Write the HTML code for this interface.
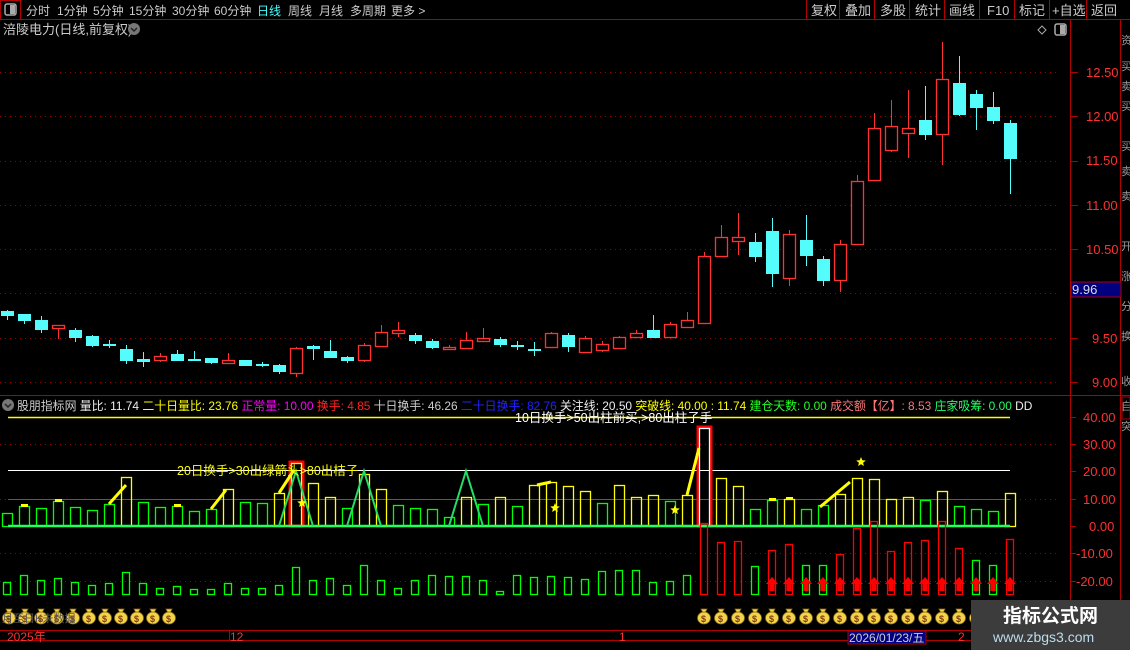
<!DOCTYPE html>
<html><head><meta charset="utf-8"><style>
body{margin:0;background:#000;width:1130px;height:650px;overflow:hidden;font-family:"Liberation Sans","Noto Sans CJK SC",sans-serif;}
svg{position:absolute;left:0;top:0}
text{font-family:"Liberation Sans","Noto Sans CJK SC",sans-serif}
</style></head><body>
<svg id="s" width="1130" height="650" xmlns="http://www.w3.org/2000/svg">
<rect width="1130" height="650" fill="#000"/>
<line x1="0" y1="19.5" x2="1130" y2="19.5" stroke="#b00000"/>
<rect x="0.5" y="0.5" width="20" height="19" fill="none" stroke="#b00000"/>
<rect x="5" y="4" width="11" height="11" rx="2" fill="none" stroke="#aaa" stroke-width="1.5"/><rect x="10" y="5" width="5" height="9" fill="#aaa"/>
<g font-size="12" fill="#ccc">
<text x="26" y="15">分时</text><text x="57" y="15">1分钟</text><text x="93" y="15">5分钟</text><text x="129" y="15">15分钟</text><text x="172" y="15">30分钟</text><text x="214" y="15">60分钟</text>
<text x="257" y="15" fill="#4ff">日线</text><text x="288" y="15">周线</text><text x="319" y="15">月线</text><text x="350" y="15">多周期</text><text x="391" y="15">更多 &gt;</text>
</g>
<g font-size="13" fill="#ccc">
<text x="811" y="15">复权</text><text x="845" y="15">叠加</text><text x="880" y="15">多股</text><text x="915" y="15">统计</text><text x="949" y="15">画线</text><text x="987" y="15">F10</text><text x="1019" y="15">标记</text><text x="1052" y="15">+自选</text><text x="1091" y="15">返回</text>
</g>
<g stroke="#b00000"><line x1="806.5" y1="0" x2="806.5" y2="19"/><line x1="839.5" y1="0" x2="839.5" y2="19"/><line x1="874.5" y1="0" x2="874.5" y2="19"/><line x1="909.5" y1="0" x2="909.5" y2="19"/><line x1="944.5" y1="0" x2="944.5" y2="19"/><line x1="979.5" y1="0" x2="979.5" y2="19"/><line x1="1014.5" y1="0" x2="1014.5" y2="19"/><line x1="1049.5" y1="0" x2="1049.5" y2="19"/><line x1="1086.5" y1="0" x2="1086.5" y2="19"/></g>
<text x="3" y="34" font-size="13" fill="#ccc">涪陵电力(日线,前复权)</text>
<circle cx="134" cy="29" r="6" fill="#777"/><path d="M131 28l3 3 3-3" stroke="#222" stroke-width="1.5" fill="none"/>
<path d="M1042 26l4 4-4 4-4-4z" fill="none" stroke="#aaa"/>
<rect x="1055" y="24" width="11" height="11" rx="2" fill="none" stroke="#aaa" stroke-width="1.5"/><rect x="1060" y="25" width="5" height="9" fill="#aaa"/>
<line x1="1070.5" y1="20" x2="1070.5" y2="650" stroke="#b00000"/>
<line x1="1120.5" y1="20" x2="1120.5" y2="630" stroke="#b00000"/>
<line x1="0" y1="395.5" x2="1130" y2="395.5" stroke="#b00000"/>
<line x1="0" y1="630.5" x2="1130" y2="630.5" stroke="#b00000"/>
<line x1="0" y1="640.5" x2="1130" y2="640.5" stroke="#b00000"/>
<g id="dyn"></g>
<g font-size="13" fill="#ff3030">
<text x="1086" y="77">12.50</text><text x="1086" y="121">12.00</text><text x="1086" y="165">11.50</text><text x="1086" y="210">11.00</text><text x="1086" y="254">10.50</text><text x="1092" y="343">9.50</text><text x="1092" y="387">9.00</text>
<text x="1083" y="422">40.00</text><text x="1083" y="449">30.00</text><text x="1083" y="476">20.00</text><text x="1083" y="504">10.00</text><text x="1089" y="531">0.00</text><text x="1076" y="558">-10.00</text><text x="1076" y="586">-20.00</text>
</g>
<rect x="1071" y="282" width="50" height="15" fill="#000080" stroke="#b00000"/>
<text x="1072" y="294" font-size="13" fill="#ddd">9.96</text>
<g fill="#999" font-size="11"><text x="1121" y="44">资</text><text x="1121" y="70">买</text><text x="1121" y="90">卖</text><text x="1121" y="110">买</text><text x="1121" y="150">买</text><text x="1121" y="175">卖</text><text x="1121" y="200">卖</text><text x="1121" y="250">开</text><text x="1121" y="280">涨</text><text x="1121" y="310">分</text><text x="1121" y="340">换</text><text x="1121" y="385">收</text><text x="1121" y="410">自</text><text x="1121" y="430">突</text></g>
<circle cx="8" cy="405" r="6" fill="#777"/><path d="M5 404l3 3 3-3" stroke="#222" stroke-width="1.5" fill="none"/>
<text y="410" font-size="11.9"><tspan x="17" fill="#ccc">股朋指标网</tspan><tspan fill="#eee"> 量比: 11.74 </tspan><tspan fill="#ff0">二十日量比: 23.76 </tspan><tspan fill="#f0f">正常量: 10.00 </tspan><tspan fill="#f22">换手: 4.85 </tspan><tspan fill="#ccc">十日换手: 46.26 </tspan><tspan fill="#22f">二十日换手: 82.76 </tspan><tspan fill="#eee">关注线: 20.50 </tspan><tspan fill="#ff0">突破线: 40.00 : 11.74 </tspan><tspan fill="#2f2">建仓天数: 0.00 </tspan><tspan fill="#f77">成交额【亿】: 8.53 </tspan><tspan fill="#2f6">庄家吸筹: 0.00 </tspan><tspan fill="#eee">DD</tspan></text>
<rect x="1122" y="397" width="8" height="22" fill="none" stroke="#b00000"/>
<g font-size="12" fill="#ff3030"><text x="7" y="641">2025年</text><text x="230" y="641">12</text><text x="619" y="641">1</text><text x="958" y="641">2</text></g>
<line x1="229.5" y1="630" x2="229.5" y2="640" stroke="#b00000"/>
<rect x="848" y="631" width="78" height="13" fill="#000080" stroke="#b00000"/>
<text x="849" y="642" font-size="12" fill="#ccc">2026/01/23/五</text>
<text x="2" y="622" font-size="11" fill="#555">月至日K未数据</text>
<rect x="971" y="600" width="159" height="50" fill="#3c3c3c"/>
<text x="1003" y="622" font-size="19" font-weight="bold" fill="#fff">指标公式网</text>
<text x="993" y="642" font-size="14" fill="#bde">www.zbgs3.com</text>
</svg>
<script>
var g=document.getElementById('dyn'),h='';
function py(p){return 72+(12.5-p)*88.57}
[12.5,12,11.5,11,10.5,10,9.5,9].forEach(function(p){var y=Math.round(py(p))+0.5;h+='<line x1="0" y1="'+y+'" x2="1060" y2="'+y+'" stroke="#900" stroke-dasharray="1,4"/><line x1="1070" y1="'+y+'" x2="1078" y2="'+y+'" stroke="#b00000"/>';});
[444,499,553,581].forEach(function(y){h+='<line x1="0" y1="'+(y+.5)+'" x2="1060" y2="'+(y+.5)+'" stroke="#900" stroke-dasharray="1,4"/>';});
[417,444,471,499,526,553,581].forEach(function(y){h+='<line x1="1070" y1="'+(y+.5)+'" x2="1076" y2="'+(y+.5)+'" stroke="#b00000"/>';});
var C=[[311,315,310,320,0],[314,320,314,324,0],[320,329,316,333,0],[325,328,325,339,1],[330,337,328,342,0],[336,345,335,347,0],[344,345,340,348,0],[349,360,345,364,0],[359,361,352,367,0],[356,360,353,362,1],[354,360,350,360,0],[359,360,351,360,0],[358,362,358,364,0],[360,363,353,363,1],[360,365,360,366,0],[364,365,362,367,0],[365,371,364,374,0],[348,373,347,377,1],[346,348,345,360,0],[351,357,340,357,0],[357,360,356,363,0],[345,360,343,362,1],[332,346,325,346,1],[330,333,322,337,1],[335,340,333,344,0],[341,347,339,349,0],[347,349,345,350,1],[340,348,332,348,1],[338,341,328,341,1],[339,344,337,347,0],[345,346,341,350,0],[349,350,342,356,0],[333,347,332,348,1],[335,346,333,352,0],[338,352,336,353,1],[344,350,341,352,1],[337,348,336,349,1],[333,337,330,338,1],[330,337,315,338,0],[324,337,322,338,1],[320,327,312,328,1],[256,323,252,324,1],[237,256,225,257,1],[237,241,213,255,1],[242,256,233,262,0],[231,273,218,287,0],[234,278,230,286,1],[240,255,215,266,0],[259,280,256,286,0],[244,280,240,292,1],[181,244,175,245,1],[128,180,113,181,1],[126,150,100,152,1],[128,133,90,158,1],[120,134,86,140,0],[79,134,42,165,1],[83,114,56,116,0],[94,107,90,130,0],[107,120,92,124,0],[123,158,120,194,0]];
C.forEach(function(c,i){var x=7+i*17,col=c[4]?'#ff3232':'#54fcfc';
h+='<line x1="'+(x+.5)+'" y1="'+c[2]+'" x2="'+(x+.5)+'" y2="'+c[3]+'" stroke="'+col+'"/>';
var bh=Math.max(c[1]-c[0],1);
if(c[4])h+='<rect x="'+(x-5.5)+'" y="'+(c[0]+.5)+'" width="12" height="'+bh+'" fill="#000" stroke="'+col+'" stroke-width="1.3"/>';
else h+='<rect x="'+(x-6)+'" y="'+c[0]+'" width="13" height="'+(bh+1)+'" fill="'+col+'"/>';});
h+='<line x1="8" y1="417.5" x2="1010" y2="417.5" stroke="#ff0" stroke-width="1.5"/>';
h+='<line x1="8" y1="470.5" x2="1010" y2="470.5" stroke="#fff"/>';
h+='<line x1="8" y1="499.5" x2="1010" y2="499.5" stroke="#d0d"/>';
var U=[513,506,508,501,507,510,504,477,502,507,506,511,509,489,502,503,493,463,483,497,508,474,489,505,508,509,517,497,504,497,506,485,482,486,491,503,485,497,495,501,495,428,478,486,509,500,499,509,505,494,478,479,499,497,500,491,506,509,511,493];
U.forEach(function(t,i){var x=7+i*17,yel=t<=499&&i!=45;var col=yel?'#ff0':'#0f0';
if(i==17||i==41)h+='<rect x="'+(x-6)+'" y="'+(t-1)+'" width="13" height="'+(527-t)+'" fill="none" stroke="#f00" stroke-width="3"/>';
h+='<rect x="'+(x-4.5)+'" y="'+(t+.5)+'" width="10" height="'+(526-t)+'" fill="none" stroke="'+(i==41?'#fff':col)+'" stroke-width="1.3"/>';});
h+='<line x1="8" y1="526" x2="1010" y2="526" stroke="#2f6" stroke-width="2.5"/>';
[[279,296,313],[347,364,381],[449,466,483]].forEach(function(t){h+='<polyline points="'+t[0]+',526 '+t[1]+',471 '+t[2]+',526" fill="none" stroke="#2d6" stroke-width="2"/>';});
[[109,504,126,485],[211,509,226,490],[279,493,294,470],[551,482,537,485],[687,495,699,448],[820,507,850,482]].forEach(function(l){h+='<line x1="'+l[0]+'" y1="'+l[1]+'" x2="'+l[2]+'" y2="'+l[3]+'" stroke="#ff0" stroke-width="3"/>';});
[[24,506],[58,501],[177,506],[772,500],[789,499]].forEach(function(d){h+='<rect x="'+(d[0]-3)+'" y="'+(d[1]-2)+'" width="7" height="3" fill="#ff0"/>';});
function star(x,y){var p=[];for(var k=0;k<10;k++){var r=k%2?2.2:5,a=-Math.PI/2+k*Math.PI/5;p.push((x+r*Math.cos(a)).toFixed(1)+','+(y+r*Math.sin(a)).toFixed(1));}h+='<polygon points="'+p.join(' ')+'" fill="#ff0"/>';}
star(302,503);star(555,508);star(675,510);star(861,462);
h+='<text x="177" y="475" font-size="12.5" fill="#ff0">20日换手&gt;30出绿箭头&gt;80出桔子</text>';
h+='<text x="515" y="422" font-size="12.5" fill="#fff">10日换手&gt;50出柱前买,&gt;80出柱子手</text>';
var L=[582,575,580,578,582,585,583,572,583,588,586,589,589,583,588,588,585,567,580,578,585,565,580,588,580,575,576,576,580,591,575,577,576,577,579,571,570,570,582,581,575,523,542,541,566,550,544,565,565,554,528,521,551,542,540,521,548,560,565,539];
L.forEach(function(t,i){var x=7+i*17,red=i>=41&&!(i==44||i==47||i==48||i==57||i==58);var col=red?'#f00':'#0f0';
h+='<rect x="'+(x-3.5)+'" y="'+(t+.5)+'" width="7" height="'+(594-t)+'" fill="none" stroke="'+col+'" stroke-width="1.3"/>';
if(i>=45)h+='<path d="M'+(x-6)+' 584l6-7 6 7h-3.5v7h-5v-7z" fill="#f00"/>';});
function bag(x){h+='<ellipse cx="'+x+'" cy="618" rx="6.5" ry="6" fill="#f3d34a" stroke="#8a6a10" stroke-width=".8"/><path d="M'+(x-3)+' 609h6l-1.5 3h-3z" fill="#f3d34a" stroke="#8a6a10" stroke-width=".8"/><text x="'+(x-3)+'" y="622" font-size="9" font-weight="bold" fill="#7a3a10">$</text>';}
for(var k=0;k<11;k++)bag(9+k*16);
for(var k=0;k<17;k++)bag(704+k*17);
g.innerHTML=h;
</script>
</body></html>
